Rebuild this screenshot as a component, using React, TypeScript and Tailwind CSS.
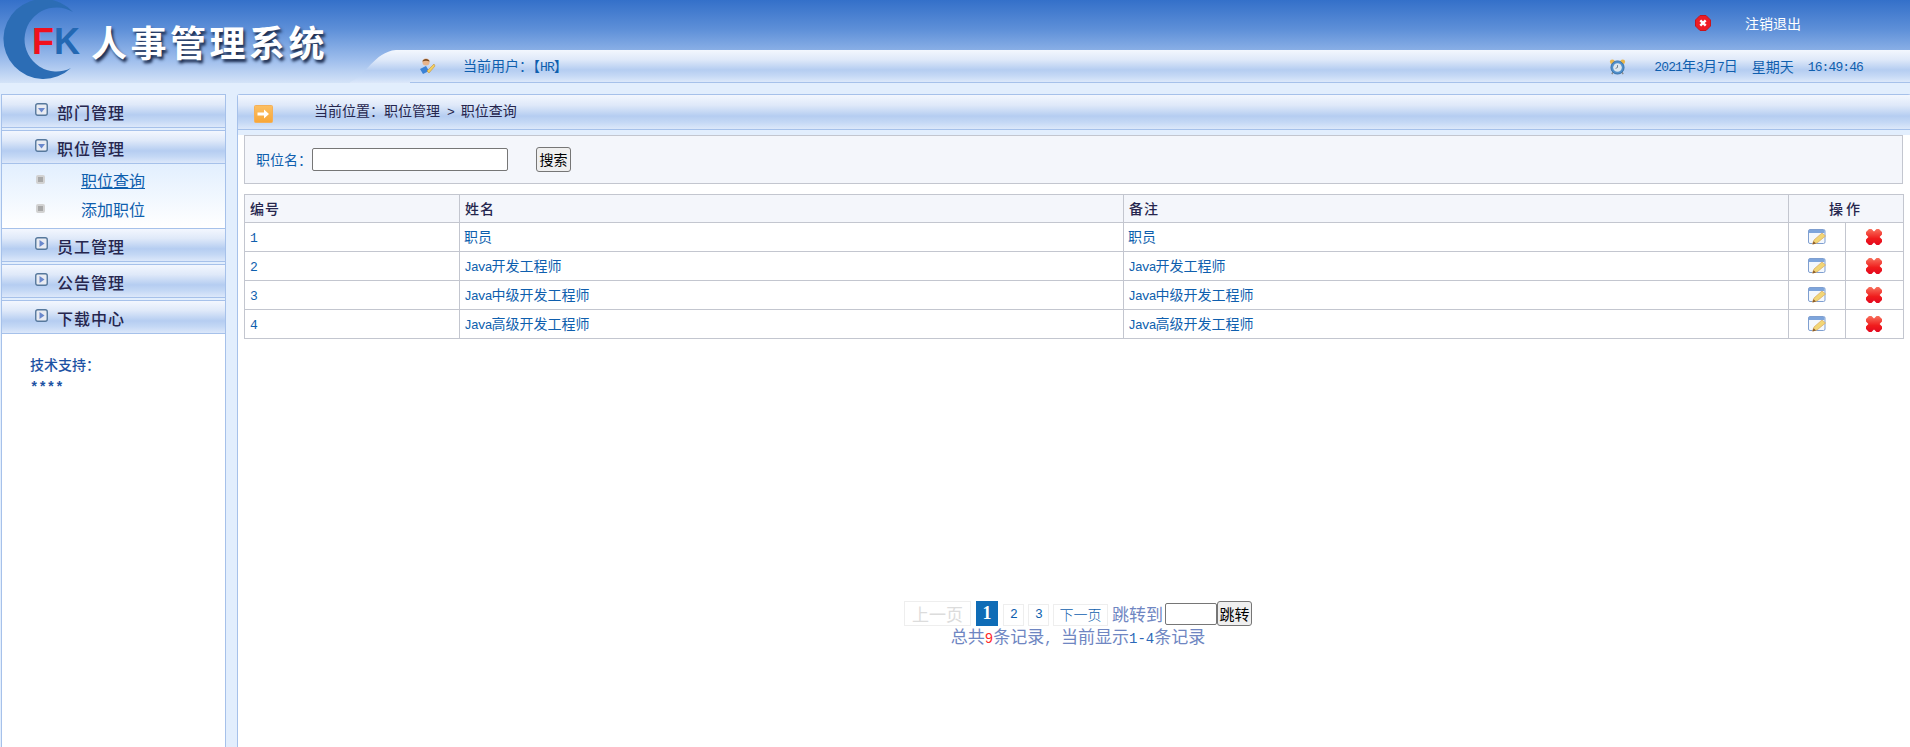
import React from 'react'

const BAR = 'bg-[linear-gradient(180deg,#f3f7fe_0%,#dfe9f9_30%,#b5cdf1_62%,#c4d8f5_80%,#dce8fa_100%)]'
const BLUE = 'text-[#0f5fae]'
const INK = 'text-[#26264e]'

const rows = [
    { id: '1', name: ['', '职员'] },
    { id: '2', name: ['Java', '开发工程师'] },
    { id: '3', name: ['Java', '中级开发工程师'] },
    { id: '4', name: ['Java', '高级开发工程师'] },
]

/** Latin runs are squeezed a little so they keep the half-width look of the CJK font. */
function Lat({ children }: { children: React.ReactNode }) {
    return <span className="whitespace-pre font-['Liberation_Mono'] text-[13px] tracking-[-0.9px]">{children}</span>
}

function Logo() {
    return (
        <div className="relative h-[83px] w-[340px] shrink-0 overflow-hidden">
            <svg width="90" height="83" viewBox="0 0 90 83" className="absolute left-0 top-0">
                <path d="M73 12 A40 40 0 1 0 71 68 A32 32 0 1 1 73 12 Z" fill="#2c6db5" />
            </svg>
            <span className="absolute left-[32px] top-[22px] font-['Liberation_Sans'] text-[36px] font-bold leading-[40px] text-[#f0101c]">
                F
            </span>
            <span className="absolute left-[54px] top-[22px] font-['Liberation_Sans'] text-[36px] font-bold leading-[40px] text-[#2368b3]">
                K
            </span>
            <span className="absolute left-[91px] top-[18px] whitespace-nowrap text-[36px] font-bold leading-[46px] tracking-[3.5px] text-white [text-shadow:2px_3px_3px_#1b2b4d]">
                人事管理系统
            </span>
        </div>
    )
}

function UserIcon() {
    return (
        <svg width="18" height="18" viewBox="0 0 18 18" className="ml-[8px] shrink-0">
            <path d="M2 12 L8 9 L11 14 L5 17 Z" fill="#3b82d6" />
            <circle cx="8" cy="5" r="3.6" fill="#e9b48a" />
            <path d="M4.4 4.5 C5 1 11 1 11.6 4.5 C9 3.4 7 3.4 4.4 4.5 Z" fill="#7a4a20" />
            <path d="M9 14 L16 7 L17 9 L11 16 Z" fill="#f2d061" stroke="#c8923a" strokeWidth="0.6" />
        </svg>
    )
}

function ClockIcon() {
    return (
        <svg width="17" height="16" viewBox="0 0 18 17" className="mt-[2px] block">
            <circle cx="3.5" cy="3" r="2.6" fill="#eab64a" />
            <circle cx="14.5" cy="3" r="2.6" fill="#eab64a" />
            <path d="M3 16 L5 13 M15 16 L13 13" stroke="#8a8a8a" strokeWidth="1.6" />
            <circle cx="9" cy="9" r="7" fill="#4f8fcb" stroke="#3a72a8" />
            <circle cx="9" cy="9" r="4.6" fill="#dbe6ee" />
            <path d="M9 6.5 V9 L7 10" stroke="#6a7a88" strokeWidth="1" fill="none" />
        </svg>
    )
}

function LogoutIcon() {
    return (
        <svg width="16" height="16" viewBox="0 0 16 16" className="shrink-0">
            <path d="M5 .5 H11 L15.5 5 V11 L11 15.5 H5 L.5 11 V5 Z" fill="#ee1c25" stroke="#c8141c" />
            <path d="M5.3 5.3 L10.7 10.7 M10.7 5.3 L5.3 10.7" stroke="#fff" strokeWidth="2.4" />
        </svg>
    )
}

function ArrowIcon() {
    return (
        <svg width="19" height="18" viewBox="0 0 19 18" className="mt-[6px] shrink-0">
            <defs>
                <linearGradient id="arrow-bg" x1="0" y1="0" x2="0" y2="1">
                    <stop offset="0" stopColor="#fcc064" />
                    <stop offset="1" stopColor="#f7a638" />
                </linearGradient>
            </defs>
            <rect x="0.5" y="0.5" width="18" height="17" rx="1" fill="url(#arrow-bg)" stroke="#f5b058" />
            <path d="M3.5 7.6 H10 V4.5 L15 9 L10 13.5 V10.4 H3.5 Z" fill="#fff" />
        </svg>
    )
}

function ToggleIcon({ open }: { open: boolean }) {
    return (
        <svg width="13" height="13" viewBox="0 0 13 13" className="mb-[3px] shrink-0">
            <rect x="0.75" y="0.75" width="11.5" height="11.5" rx="2" fill="#e8ebf2" stroke="#56789c" strokeWidth="1.4" />
            {open ? <path d="M3 5 H10 L6.5 9.5 Z" fill="#6a88cc" /> : <path d="M4.5 3 L9.5 6.5 L4.5 10 Z" fill="#6a88cc" />}
        </svg>
    )
}

function EditIcon() {
    return (
        <svg width="18" height="16" viewBox="0 0 18 16" className="mx-auto block">
            <rect x="0.5" y="0.5" width="16.5" height="14" rx="1.5" fill="#f4f8fd" stroke="#7f9fd0" />
            <rect x="1" y="1" width="15.5" height="3" fill="#7ea5dc" />
            <path d="M4.5 15 L6 11 L14 4 L17.5 7 L9 14 Z" fill="#f2d675" stroke="#d8a860" strokeWidth="0.7" />
            <path d="M4.5 15.5 L5.6 12.2 L8 14.4 Z" fill="#8a5a2a" />
        </svg>
    )
}

function DeleteIcon() {
    return (
        <svg width="16" height="16" viewBox="0 0 16 16" className="mx-auto block">
            <defs>
                <linearGradient id="delete-bg" x1="0" y1="0" x2="0" y2="1">
                    <stop offset="0" stopColor="#f8705c" />
                    <stop offset="0.6" stopColor="#f01c1c" />
                    <stop offset="1" stopColor="#e40820" />
                </linearGradient>
            </defs>
            <path
                d="M3 0 H5.5 L8 2.4 L10.5 0 H13 L16 3 V5.5 L13.6 8 L16 10.5 V13 L13 16 H10.5 L8 13.6 L5.5 16 H3 L0 13 V10.5 L2.4 8 L0 5.5 V3 Z"
                fill="url(#delete-bg)"
            />
        </svg>
    )
}

function Bullet() {
    return <span className="h-[9px] w-[9px] shrink-0 rounded-[2px] border-2 border-[#d2d2d2] bg-[#a8a8a8]" />
}

function MenuHead({ label, open = false }: { label: string; open?: boolean }) {
    return (
        <div className={`flex h-[34px] items-center border-y border-[#a6c1ea] pl-[33px] ${BAR}`}>
            <ToggleIcon open={open} />
            <span className={`ml-[9px] pt-[2px] text-[16px] font-medium tracking-[1px] ${INK}`}>{label}</span>
        </div>
    )
}

function Sidebar() {
    return (
        <aside className="ml-[1px] flex w-[225px] shrink-0 flex-col border-x border-[#a6c1ea] bg-white">
            <MenuHead label="部门管理" open />
            <div className="h-[2px] bg-[#e2eefd]" />
            <MenuHead label="职位管理" open />
            <div className="flex h-[64px] flex-col bg-[linear-gradient(180deg,#e2effe,#ffffff)] pl-[34px]">
                <div className="flex h-[31px] items-center">
                    <Bullet />
                    <a className={`ml-[36px] text-[16px] underline ${BLUE}`}>职位查询</a>
                </div>
                <div className="flex h-[27px] items-center">
                    <Bullet />
                    <span className={`ml-[36px] text-[16px] ${BLUE}`}>添加职位</span>
                </div>
            </div>
            <MenuHead label="员工管理" />
            <div className="h-[2px] bg-[#e2eefd]" />
            <MenuHead label="公告管理" />
            <div className="h-[2px] bg-[#e2eefd]" />
            <MenuHead label="下载中心" />
            <div className="pl-[28px] pt-[20px] text-[14px] font-medium leading-[21px] text-[#1d52a3]">
                <p>技术支持：</p>
                <p className="pt-[3px] font-['Liberation_Mono'] font-bold">****</p>
            </div>
        </aside>
    )
}

function SearchBar() {
    return (
        <div className="mr-px flex h-[49px] items-center border border-[#c3c6cf] bg-[#f4f6fb] pl-[11px]">
            <span className={`text-[14px] ${BLUE}`}>职位名：</span>
            <input className="h-[23px] w-[196px] rounded-[2px] border border-[#767676] bg-white" />
            <button className="ml-[28px] h-[25px] w-[35px] rounded-[3px] border border-[#767676] bg-[#efefef] text-[14px] text-black">
                搜索
            </button>
        </div>
    )
}

function DataTable() {
    const cell = 'border border-[#c3c6cf] px-[5px]'
    const head = `${cell} text-left text-[14px] font-medium tracking-[1px] ${INK}`
    return (
        <table className="mt-[10px] w-[1659px] table-fixed border-collapse">
            <colgroup>
                <col className="w-[215px]" />
                <col className="w-[664px]" />
                <col className="w-[665px]" />
                <col className="w-[57px]" />
                <col className="w-[58px]" />
            </colgroup>
            <thead>
                <tr className="h-[28px] bg-[#f4f6fb]">
                    <th className={head}>编号</th>
                    <th className={head}>姓名</th>
                    <th className={head}>备注</th>
                    <th colSpan={2} className={`${cell} text-center text-[14px] font-medium tracking-[3px] ${INK}`}>
                        操作
                    </th>
                </tr>
            </thead>
            <tbody>
                {rows.map((row) => (
                    <tr key={row.id} className={`h-[29px] text-[14px] ${BLUE}`}>
                        <td className={cell}>
                            <Lat>{row.id}</Lat>
                        </td>
                        <td className={`${cell} pl-[4px]`}>
                            <Lat>{row.name[0]}</Lat>
                            {row.name[1]}
                        </td>
                        <td className={`${cell} pl-[4px]`}>
                            <Lat>{row.name[0]}</Lat>
                            {row.name[1]}
                        </td>
                        <td className={cell}>
                            <EditIcon />
                        </td>
                        <td className={`${cell} pl-[4px] pr-[6px]`}>
                            <DeleteIcon />
                        </td>
                    </tr>
                ))}
            </tbody>
        </table>
    )
}

function PageBox({ children, className = '' }: { children: React.ReactNode; className?: string }) {
    return <span className={`flex items-center justify-center border border-[#eeeeee] ${className}`}>{children}</span>
}

function Pager() {
    return (
        <div className="mt-[262px] flex flex-col items-center pl-[8px] text-[17px] text-[#6f86c2]">
            <div className="flex h-[25px] items-center">
                <PageBox className="h-[25px] w-[67px] text-[#dcdcdc]">上一页</PageBox>
                <span className="ml-[5px] flex h-[25px] w-[22px] items-center justify-center bg-[#0f6cb6] font-['Liberation_Serif'] text-[18px] font-bold text-white">
                    1
                </span>
                <PageBox className={`ml-[5px] mt-[2px] h-[22px] w-[21px] ${BLUE}`}>
                    <Lat>2</Lat>
                </PageBox>
                <PageBox className={`ml-[4px] mt-[2px] h-[22px] w-[21px] ${BLUE}`}>
                    <Lat>3</Lat>
                </PageBox>
                <PageBox className={`ml-[4px] mt-[2px] h-[22px] w-[55px] text-[14px] font-light ${BLUE}`}>下一页</PageBox>
                <span className="ml-[4px] w-[53px] whitespace-nowrap">跳转到</span>
                <input className="h-[22px] w-[52px] rounded-[2px] border border-[#767676] bg-white" />
                <button className="h-[25px] w-[35px] rounded-[3px] border border-[#767676] bg-[#efefef] text-[15px] leading-none text-black">
                    跳转
                </button>
            </div>
            <p className="mt-[-1px] whitespace-pre leading-[22px]">
                总共<span className="font-['Liberation_Mono'] text-[14px] text-[#ff2a2a]">9</span>条记录
                <span className="font-['Liberation_Mono'] text-[14px]">, </span>
                当前显示<span className="font-['Liberation_Mono'] text-[14px] text-[#2b68b8]">1-4</span>条记录
            </p>
        </div>
    )
}

export default function App() {
    return (
        <div className="flex h-[747px] w-[1910px] flex-col overflow-hidden bg-[#e2eefd] font-['Noto_Sans_CJK_SC',sans-serif]">
            <header className="flex h-[83px] shrink-0 bg-[linear-gradient(180deg,#3470c9_0%,#5d8fd8_35%,#9dbdec_72%,#d4e3f8_100%)]">
                <Logo />
                <div className="flex flex-1 flex-col">
                    <div className="flex h-[50px] items-start pl-[1355px] pt-[15px]">
                        <LogoutIcon />
                        <span className="ml-[34px] text-[14px] leading-[16px] text-white">注销退出</span>
                    </div>
                    <div className="flex h-[33px]">
                        <svg width="60" height="33" viewBox="0 0 60 33" className="ml-[10px] shrink-0">
                            <defs>
                                <linearGradient id="tab-bg" x1="0" y1="0" x2="0" y2="1">
                                    <stop offset="0" stopColor="#f3f7fe" />
                                    <stop offset="0.3" stopColor="#dfe9f9" />
                                    <stop offset="0.62" stopColor="#b5cdf1" />
                                    <stop offset="0.8" stopColor="#c4d8f5" />
                                    <stop offset="1" stopColor="#dce8fa" />
                                </linearGradient>
                            </defs>
                            <path d="M0 32 C16 26 24 2 46 0 H60 V33 H0 Z" fill="url(#tab-bg)" />
                        </svg>
                        <div className={`flex flex-1 items-center border-b border-[#a6c1ea] text-[14px] ${BLUE} ${BAR}`}>
                            <UserIcon />
                            <span className="ml-[27px]">
                                当前用户：【<Lat>HR</Lat>】
                            </span>
                            <span className="ml-auto">
                                <ClockIcon />
                            </span>
                            <span className="ml-[28px]">
                                <Lat>2021</Lat>年<Lat>3</Lat>月<Lat>7</Lat>日
                            </span>
                            <span className="ml-[14px]">星期天</span>
                            <span className="ml-[14px] mr-[47px]">
                                <Lat>16:49:46</Lat>
                            </span>
                        </div>
                    </div>
                </div>
            </header>
            <div className="flex min-h-0 flex-1 pt-[11px]">
                <Sidebar />
                <main className="ml-[11px] mr-[1px] flex-1 rounded-t-[3px] border-x border-t border-[#a6c1ea] bg-white">
                    <div className={`flex h-[35px] items-center border-b border-[#a6c1ea] pb-[2px] pl-[16px] text-[14px] ${INK} ${BAR}`}>
                        <ArrowIcon />
                        <span className="ml-[41px]">
                            当前位置：职位管理
                            <Lat> &gt; </Lat>
                            职位查询
                        </span>
                    </div>
                    <div className="bg-[linear-gradient(180deg,#e2eefd_0,#e2eefd_5px,transparent_5px)] px-[6px] pt-[5px]">
                        <SearchBar />
                        <DataTable />
                        <Pager />
                    </div>
                </main>
            </div>
        </div>
    )
}
